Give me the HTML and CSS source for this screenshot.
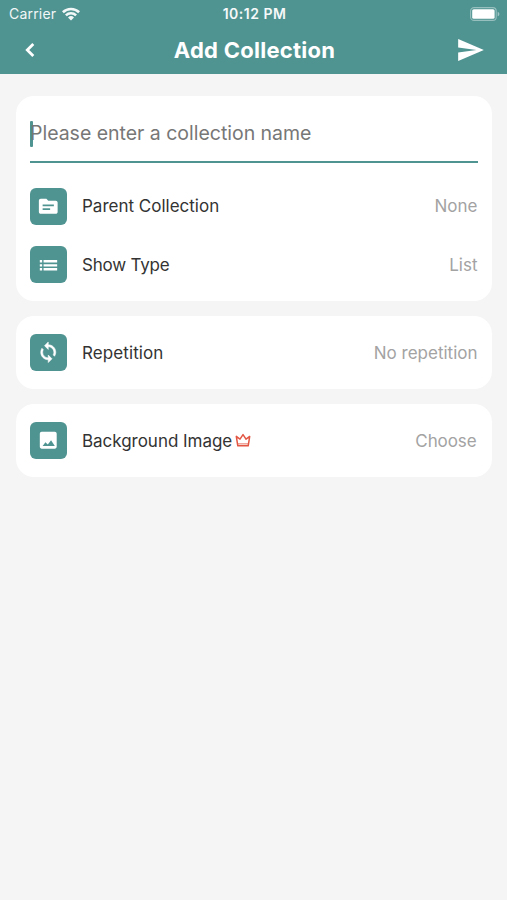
FILE: index.html
```html
<!DOCTYPE html>
<html lang="en">
<head>
<meta charset="utf-8">
<title>Add Collection</title>
<link rel="stylesheet" href="styles.css">
</head>
<body>
<header class="header">
  <div class="status">
    <div class="carrier"><span>Carrier</span>
      <svg class="wifi" viewBox="0 0 18 14"><path d="M0 4.3a13 13 0 0 1 18 0L16.2 6.200a10.300 10.300 0 0 0-14.400 0zM3 7.400a8.700 8.700 0 0 1 12 0L13.200 9.300a6 6 0 0 0-8.400 0zM6 10.400a4.400 4.400 0 0 1 6 0L9 13.600z"/></svg>
    </div>
    <span class="time">10:12 PM</span>
    <svg class="battery" viewBox="0 0 30 14"><rect x=".6" y=".6" width="25.600" height="12.800" rx="3.500" fill="none" stroke="#fff" stroke-opacity=".4" stroke-width="1.100"/><rect x="2.200" y="2.200" width="22.400" height="9.600" rx="1.600"/><path d="M27.700 4.700c2.200.8 2.200 3.800 0 4.600z" opacity=".45"/></svg>
  </div>
  <nav class="nav">
    <svg class="back" viewBox="0 0 10 16"><path d="M8.300 2 2.300 8l6 6"/></svg>
    <h1 class="title">Add Collection</h1>
    <svg class="send" viewBox="2 3 21 18"><path d="M2.010 21 23 12 2.010 3 2 10l15 2-15 2z"/></svg>
  </nav>
</header>
<main class="content">
  <section class="card">
    <div class="field"><span class="cursor"></span><span class="placeholder">Please enter a collection name</span></div>
    <div class="row">
      <span class="tile"><svg viewBox="0 0 24 24"><path d="M20 6h-8l-2-2H4c-1.100 0-2 .9-2 2v12c0 1.100.9 2 2 2h16c1.100 0 2-.9 2-2V8c0-1.100-.9-2-2-2zm-6 10H6v-2h8zm4-4H6v-2h12z"/></svg></span>
      <span class="label">Parent Collection</span><span class="value">None</span>
    </div>
    <div class="row">
      <span class="tile"><svg viewBox="0 0 24 24"><path d="M3 6.500h2.500V9H3zM3 10.800h2.500v2.500H3zM3 15h2.500v2.500H3zM7 6.500h14.500V9H7zM7 10.800h14.500v2.500H7zM7 15h14.500v2.500H7z"/></svg></span>
      <span class="label show-type">Show Type</span><span class="value">List</span>
    </div>
  </section>
  <section class="card">
    <div class="row single">
      <span class="tile"><svg viewBox="0 0 24 24"><path stroke="#fff" stroke-width=".6" d="M12 4V1L8 5l4 4V6c3.310 0 6 2.690 6 6 0 1.010-.25 1.970-.7 2.800l1.460 1.460C19.540 15.030 20 13.570 20 12c0-4.420-3.580-8-8-8zm0 14c-3.310 0-6-2.690-6-6 0-1.010.25-1.970.7-2.800L5.240 7.740C4.460 8.970 4 10.430 4 12c0 4.420 3.580 8 8 8v3l4-4-4-4z"/></svg></span>
      <span class="label repetition">Repetition</span><span class="value">No repetition</span>
    </div>
  </section>
  <section class="card">
    <div class="row single">
      <span class="tile"><svg viewBox="0 0 24 24"><path d="M21 19V5c0-1.100-.9-2-2-2H5c-1.100 0-2 .9-2 2v14c0 1.100.9 2 2 2h14c1.100 0 2-.9 2-2zM6 18l3-4 2.500 2.500 3.500-4.500 4 6z"/></svg></span>
      <span class="label background">Background Image</span>
      <svg class="crown" viewBox="0 0 16 14"><path d="M1.300 3.400 2.800 12.800h10.400l1.500-9.400-3.700 2.800L8 1.600 5 6.200z"/><path d="M2.800 10.800h10.400" opacity=".55"/></svg>
      <span class="value choose">Choose</span>
    </div>
  </section>
</main>
</body>
</html>
```
FILE: styles.css
```css
* { box-sizing: border-box; }
body {
  margin: 0;
  min-height: 900px;
  background: #f5f5f5;
  font-family: Inter, "Liberation Sans", sans-serif;
}
svg { display: block; fill: #fff; flex: none; }
.header { height: 74px; background: #509492; color: #fff; }
.status {
  display: grid;
  grid-template-columns: 1fr auto 1fr;
  align-items: center;
  height: 27px;
  padding: 0 7px 0 9px;
  font-size: 14px;
  line-height: 18px;
}
.carrier { display: flex; align-items: center; gap: 6px; letter-spacing: .2px; opacity: .93; }
.wifi { width: 18px; height: 14px; }
.time { font-size: 14px; font-weight: 600; letter-spacing: .5px; opacity: .95; }
.battery { width: 30px; height: 14px; justify-self: end; }
.nav {
  display: grid;
  grid-template-columns: 1fr auto 1fr;
  align-items: center;
  height: 46px;
  padding: 0 23px 0 25px;
}
.back { width: 10px; height: 16px; fill: none; stroke: #fff; stroke-width: 2.800; }
.title { margin: 0; font-size: 22px; line-height: 28px; font-weight: 700; letter-spacing: .25px; }
.send { width: 26px; height: 22px; justify-self: end; }
.content { display: flex; flex-direction: column; gap: 15px; padding: 22px 15px 0 16px; }
.card { padding: 7px 14px 7px 14px; border-radius: 18px; background: #fff; }
.field {
  display: flex;
  align-items: center;
  height: 60px;
  margin-bottom: 14px;
  padding-top: 3px;
  border-bottom: 2.500px solid #509492;
  color: #777;
}
.cursor { width: 2.500px; height: 26px; margin-right: -2.500px; border-radius: 1px; background: #509492; }
.placeholder { padding-bottom: 2px; font-size: 19.500px; letter-spacing: -.02px; white-space: nowrap; }
.row { display: flex; align-items: center; height: 58.600px; }
.row.single { height: 59px; }
.tile { display: grid; place-items: center; width: 37px; height: 37px; margin-right: 15px; border-radius: 6px; background: #509492; }
.tile svg { width: 22.500px; height: 22.500px; margin-right: .5px; }
.label, .value { font-size: 17px; line-height: 22px; white-space: nowrap; }
.label { color: #333; }
.show-type { letter-spacing: -.2px; }
.repetition { letter-spacing: .1px; }
.background { letter-spacing: -.03px; }
.value { margin-left: auto; padding-right: .5px; color: #a3a3a3; }
.choose { padding-right: 1.500px; letter-spacing: -.1px; }
.crown { width: 16px; height: 14px; margin: -2px 0 0 3px; fill: none; stroke: #e25744; stroke-width: 1.500; stroke-linejoin: round; }
```
